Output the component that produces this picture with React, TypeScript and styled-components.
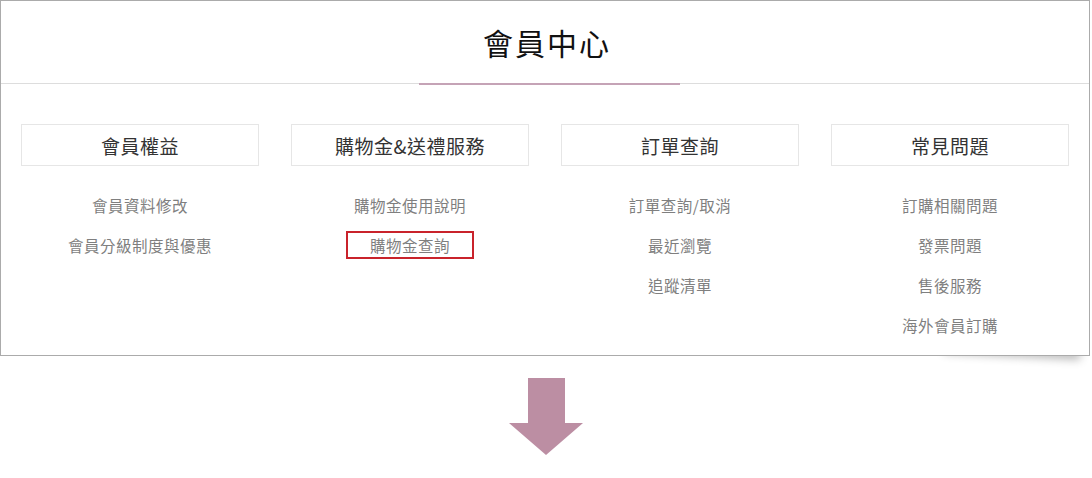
import styled, { createGlobalStyle } from "styled-components";

//  Styles
const GlobalStyle = createGlobalStyle`
  html, body {
    margin: 0;
    padding: 0;
    background: #ffffff;
  }
  body {
    font-family: "Noto Sans CJK TC", "Noto Sans", "Liberation Sans", sans-serif;
  }
  * {
    box-sizing: border-box;
  }
`;

const Page = styled.div`
  position: relative;
  z-index: 0;
  width: 1092px;
  display: flex;
  flex-direction: column;
  align-items: center;
`;

const Panel = styled.section`
  position: relative;
  align-self: flex-start;
  width: 1090px;
  height: 356px;
  background: #ffffff;
  border: 1px solid #ababab;

  &::after {
    content: "";
    position: absolute;
    right: 6px;
    bottom: 10px;
    width: 140px;
    height: 14px;
    box-shadow: 0 13px 10px -2px rgba(0, 0, 0, 0.3);
    transform: rotate(3deg);
    z-index: -1;
  }
`;

const Header = styled.header`
  height: 82px;
  display: flex;
  align-items: center;
  justify-content: center;
  padding-left: 4px;
`;

const Title = styled.h1`
  margin: 0;
  font-size: 30px;
  font-weight: 400;
  color: #111111;
  letter-spacing: 2px;
`;

const Divider = styled.div`
  height: 1px;
  background: #dddddd;
  display: flex;
  justify-content: center;
  align-items: center;
  padding-left: 8px;
`;

const Accent = styled.span`
  width: 261px;
  height: 2px;
  background: #c5a3b6;
`;

const Columns = styled.div`
  display: grid;
  grid-template-columns: repeat(4, 1fr);
  gap: 32px;
  padding: 40px 20px 0;
`;

const Column = styled.div`
  display: flex;
  flex-direction: column;
  align-items: center;
`;

const Category = styled.h2`
  margin: 0;
  width: 100%;
  height: 42px;
  border: 1px solid #e6e6e6;
  display: flex;
  align-items: center;
  justify-content: center;
  font-size: 19px;
  font-weight: 400;
  color: #333333;
  letter-spacing: 0.5px;
`;

const LinkList = styled.ul`
  list-style: none;
  margin: 19px 0 0;
  padding: 0;
  display: flex;
  flex-direction: column;
  align-items: center;
`;

const LinkItem = styled.li`
  height: 40px;
  display: flex;
  align-items: center;
`;

const Link = styled.a<{ $active?: boolean }>`
  display: inline-flex;
  align-items: center;
  justify-content: center;
  font-size: 15.5px;
  color: #7f7f7f;
  text-decoration: none;
  letter-spacing: 0.5px;
  height: 28px;
  padding: 0 ${(p) => (p.$active ? "22px" : "0")};
  border: ${(p) => (p.$active ? "2px solid #c9232b" : "none")};
`;

const Arrow = styled.svg`
  margin-top: 22px;
  display: block;
`;

const sections = [
  { title: "會員權益", links: ["會員資料修改", "會員分級制度與優惠"] },
  { title: "購物金&送禮服務", links: ["購物金使用說明", "購物金查詢"] },
  { title: "訂單查詢", links: ["訂單查詢/取消", "最近瀏覽", "追蹤清單"] },
  { title: "常見問題", links: ["訂購相關問題", "發票問題", "售後服務", "海外會員訂購"] },
];

//  App Component
const App = () => {
  return (
    <>
      <GlobalStyle />
      <Page>
        <Panel>
          <Header>
            <Title>會員中心</Title>
          </Header>
          <Divider>
            <Accent />
          </Divider>
          <Columns>
            {sections.map((s) => (
              <Column key={s.title}>
                <Category>{s.title}</Category>
                <LinkList>
                  {s.links.map((l) => (
                    <LinkItem key={l}>
                      <Link href="#" $active={l === "購物金查詢"}>
                        {l}
                      </Link>
                    </LinkItem>
                  ))}
                </LinkList>
              </Column>
            ))}
          </Columns>
        </Panel>
        <Arrow width="76" height="78" viewBox="0 0 76 78">
          <polygon points="20,0 57,0 57,45 75,45 38,77 1,45 20,45" fill="#bc8ea3" />
        </Arrow>
      </Page>
    </>
  );
};

export default App;
